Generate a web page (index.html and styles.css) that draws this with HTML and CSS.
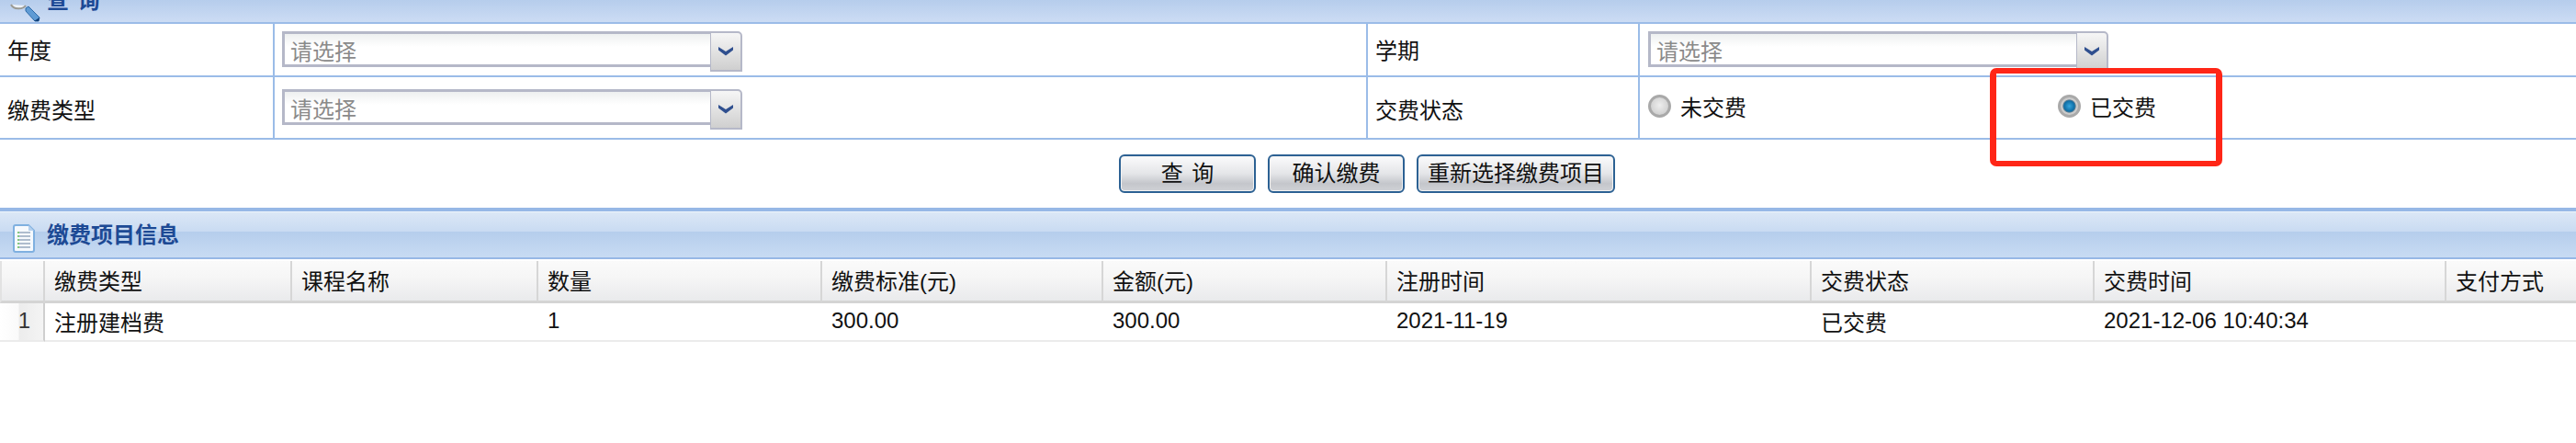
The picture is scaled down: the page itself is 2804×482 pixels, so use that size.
FILE: index.html
```html
<!DOCTYPE html>
<html lang="zh-CN">
<head>
<meta charset="utf-8">
<title>缴费项目信息</title>
<link rel="stylesheet" href="styles.css">
</head>
<body>
<div class="page">
  <div class="query-head">
    <svg class="query-icon" width="34" height="18" viewBox="0 0 34 18">
      <path d="M2 -1 A9 7 0 0 0 18 0" fill="#eef3fa" stroke="#9a9a94" stroke-width="2"/>
      <path d="M18 3 L21 1 L33 13 L32 17 L28 17 L18 6 Z" fill="#5f9bd4" stroke="#2c6aa8" stroke-width="1"/>
      <path d="M27 17 L32 17 L33 13 Z" fill="#123f78"/>
    </svg>
    <span class="query-title">查 询</span>
  </div>

  <div class="form-grid">
    <div class="cell cell-label row-a">年度</div>
    <div class="cell cell-value row-a">
      <div class="combo"><span class="combo-text">请选择</span><span class="combo-btn"><svg width="18" height="11" viewBox="0 0 18 11"><path d="M1 1 L9 6 L17 1 V4.5 L9 10.5 L1 4.5 Z" fill="#2f4f8f"/></svg></span></div>
    </div>
    <div class="cell cell-label row-a">学期</div>
    <div class="cell cell-last row-a">
      <div class="combo"><span class="combo-text">请选择</span><span class="combo-btn"><svg width="18" height="11" viewBox="0 0 18 11"><path d="M1 1 L9 6 L17 1 V4.5 L9 10.5 L1 4.5 Z" fill="#2f4f8f"/></svg></span></div>
    </div>
    <div class="cell cell-label row-b">缴费类型</div>
    <div class="cell cell-value row-b">
      <div class="combo"><span class="combo-text">请选择</span><span class="combo-btn"><svg width="18" height="11" viewBox="0 0 18 11"><path d="M1 1 L9 6 L17 1 V4.5 L9 10.5 L1 4.5 Z" fill="#2f4f8f"/></svg></span></div>
    </div>
    <div class="cell cell-label row-b">交费状态</div>
    <div class="cell cell-last row-b radios">
      <label class="radio-item"><span class="radio"></span>未交费</label>
      <label class="radio-item"><span class="radio radio-on"></span>已交费</label>
    </div>
  </div>

  <div class="actions">
    <button class="btn btn-query" type="button">查 询</button>
    <button class="btn btn-confirm" type="button">确认缴费</button>
    <button class="btn btn-reset" type="button">重新选择缴费项目</button>
  </div>

  <div class="info-head">
    <svg class="doc-icon" width="24" height="31" viewBox="0 0 24 31">
      <path d="M1 3 Q1 1 3 1 H17 L23 7 V28 Q23 30 21 30 H3 Q1 30 1 28 Z" fill="#f6f9fd" stroke="#7fb0e0" stroke-width="2"/>
      <path d="M17 1 V7 H23 Z" fill="#b4d0ee"/>
      <path d="M5 9 H19 M5 13 H19 M5 17 H19 M5 21 H19 M5 25 H19" stroke="#aebccd" stroke-width="2"/>
      <path d="M5 9 H7 M5 13 H7 M5 17 H7 M5 21 H7 M5 25 H7" stroke="#84c97e" stroke-width="2"/>
    </svg>
    <span class="info-title">缴费项目信息</span>
  </div>

  <table class="grid">
    <colgroup>
      <col class="c0"><col class="c1"><col class="c2"><col class="c3"><col class="c4">
      <col class="c5"><col class="c6"><col class="c7"><col class="c8"><col class="c9">
    </colgroup>
    <thead>
      <tr>
        <th class="num-head"></th>
        <th>缴费类型</th><th>课程名称</th><th>数量</th><th>缴费标准(元)</th>
        <th>金额(元)</th><th>注册时间</th><th>交费状态</th><th>交费时间</th><th>支付方式</th>
      </tr>
    </thead>
    <tbody>
      <tr>
        <td class="num">1</td>
        <td>注册建档费</td><td></td><td>1</td><td>300.00</td>
        <td>300.00</td><td>2021-11-19</td><td>已交费</td><td>2021-12-06 10:40:34</td><td></td>
      </tr>
    </tbody>
  </table>

  <div class="annotation"></div>
</div>
</body>
</html>
```
FILE: styles.css
```css
* { box-sizing: border-box; }
html, body { margin: 0; padding: 0; background: #fff; }
body {
  font-family: "Liberation Sans", "Noto Sans CJK SC", sans-serif;
  font-size: 24px;
  color: #111;
}
.page { position: relative; width: 2804px; height: 482px; overflow: hidden; }

.query-head {
  height: 26px;
  display: flex;
  align-items: flex-end;
  padding-left: 10px;
  border-bottom: 2px solid #9bbce8;
  background: linear-gradient(#b6cdec, #ccdcf4);
  overflow: hidden;
}
.query-icon { flex: none; margin-right: 7px; overflow: visible; }
.query-title {
  font-weight: 700;
  color: #1d4a95;
  line-height: 24px;
  height: 24px;
  transform: translateY(-11px);
  word-spacing: 3px;
}

.form-grid {
  display: grid;
  grid-template-columns: 299px 1190px 296px 1fr;
  grid-template-rows: 58px 68px;
}
.cell {
  display: flex;
  align-items: center;
  border-bottom: 2px solid #9bbce8;
  border-right: 2px solid #9bbce8;
  padding-left: 8px;
}
.cell-last { border-right: 0; padding-left: 9px; }
.cell-label.row-a { padding-bottom: 2px; }
.cell-label.row-b { padding-top: 2px; }

.cell-value, .cell-last { align-items: flex-start; }
.cell-value.row-a, .cell-last.row-a { padding-top: 8px; }
.cell-value.row-b, .cell-last.row-b { padding-top: 13px; }

.combo { display: flex; align-items: flex-start; height: 44px; }
.combo-text {
  width: 466px;
  height: 39px;
  border: 3px solid #b5b8c8;
  border-right: 0;
  padding: 1px 0 0 6px;
  color: #8a8a8a;
  line-height: 37px;
  background: linear-gradient(#eef0f0, #fff 14px);
}
.combo-btn {
  width: 35px;
  height: 44px;
  display: flex;
  align-items: flex-start;
  justify-content: center;
  padding-top: 14px;
  border: 2px solid #b5b8c8;
  border-width: 2px 2px 2px 1px;
  border-top-right-radius: 5px;
  background: linear-gradient(#f6f6f6, #cfcfcf);
}

.cell-last.radios { align-items: center; padding-top: 0; padding-bottom: 3px; }
.radio-item { display: flex; align-items: center; gap: 10px; width: 446px; }
.radio {
  flex: none;
  width: 25px;
  height: 25px;
  border-radius: 50%;
  border: 3px solid #a9a9a9;
  background: radial-gradient(circle at 50% 45%, #eeeeee 0, #d4d4d4 65%, #bdbdbd 100%);
}
.radio-on {
  background: radial-gradient(circle, #36a5dc 0, #0f6ea6 42%, #5c7f94 50%, #c9c9c9 56%, #d6d6d6 100%);
}

.actions {
  height: 74px;
  display: flex;
  align-items: flex-start;
  padding: 16px 0 0 1218px;
  gap: 13px;
}
.btn {
  height: 42px;
  padding: 0;
  border: 2px solid #2c6193;
  border-radius: 6px;
  font: inherit;
  line-height: 36px;
  color: #111;
  background: linear-gradient(#fbfbfc 0, #e4e5e8 50%, #c4c6cb 78%, #d0d2d6 100%);
  box-shadow: inset 0 0 0 1px #f2f2f2;
}
.btn-query { width: 149px; word-spacing: 3px; }
.btn-confirm { width: 149px; }
.btn-reset { width: 216px; }

.info-head {
  height: 56px;
  display: flex;
  align-items: center;
  gap: 13px;
  padding: 0 0 0 14px;
  border-top: 4px solid #97b8e6;
  border-bottom: 2px solid #97b8e6;
  background: linear-gradient(#eef4fb 0, #eef4fb 1px, #dbe7f6 1px, #c9dbf2 22px, #b5cdec 22px, #c8dbf3 100%);
}
.doc-icon { flex: none; margin-top: 8px; }
.info-title { font-weight: 700; color: #1d4a95; line-height: 28px; margin-top: 2px; }

.grid {
  width: 2804px;
  margin-top: 2px;
  border-collapse: separate;
  border-spacing: 0;
  table-layout: fixed;
}
.c0 { width: 49px; } .c1 { width: 269px; } .c2 { width: 268px; }
.c3 { width: 309px; } .c4 { width: 306px; } .c5 { width: 309px; }
.c6 { width: 462px; } .c7 { width: 308px; } .c8 { width: 383px; } .c9 { width: 141px; }

.grid th {
  height: 46px;
  padding: 0 0 2px 10px;
  font-weight: 400;
  text-align: left;
  white-space: nowrap;
  border-right: 2px solid #d6d6d6;
  border-bottom: 3px solid #d4d4d4;
  background: linear-gradient(#fafafa, #f6f6f6 40%, #e9eaec);
}
.grid th:last-child { border-right: 0; }
.grid .num-head { border-left: 2px solid #e2e2e2; padding: 0; }
.grid td {
  height: 42px;
  padding: 0 0 2px 10px;
  white-space: nowrap;
  border-bottom: 2px solid #ebebeb;
}
.grid .num {
  padding: 0 14px 2px 0;
  text-align: right;
  color: #333;
  border-right: 2px solid #cfcfcf;
  background: linear-gradient(90deg, #fff 0, #fafafa 20px, #ececec 21px, #f4f4f4 100%);
}

.annotation {
  position: absolute;
  left: 2166px;
  top: 74px;
  width: 253px;
  height: 107px;
  border: solid #ff2617;
  border-width: 6px 7px;
  border-radius: 7px;
}
```
